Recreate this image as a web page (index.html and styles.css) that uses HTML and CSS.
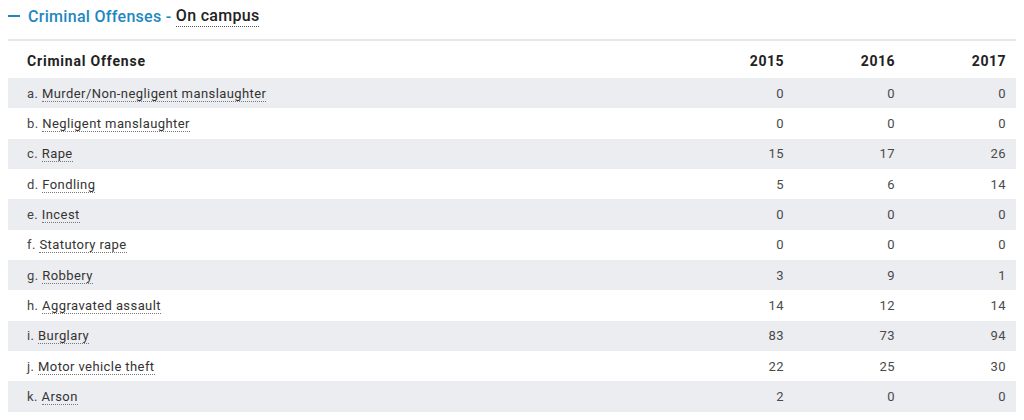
FILE: index.html
```html
<!DOCTYPE html>
<html>
<head>
<meta charset="utf-8">
<link rel="stylesheet" href="styles.css">
</head>
<body>
<div class="section">
  <h2 class="title"><span class="dash"></span><span class="blue">Criminal Offenses - </span><span class="term">On campus</span></h2>
  <table class="data">
    <thead>
      <tr><th class="name">Criminal Offense</th><th>2015</th><th>2016</th><th>2017</th></tr>
    </thead>
    <tbody>
      <tr><td class="name">a. <span class="term">Murder/Non-negligent manslaughter</span></td><td>0</td><td>0</td><td>0</td></tr>
      <tr><td class="name">b. <span class="term">Negligent manslaughter</span></td><td>0</td><td>0</td><td>0</td></tr>
      <tr><td class="name">c. <span class="term">Rape</span></td><td>15</td><td>17</td><td>26</td></tr>
      <tr><td class="name">d. <span class="term">Fondling</span></td><td>5</td><td>6</td><td>14</td></tr>
      <tr><td class="name">e. <span class="term">Incest</span></td><td>0</td><td>0</td><td>0</td></tr>
      <tr><td class="name">f. <span class="term">Statutory rape</span></td><td>0</td><td>0</td><td>0</td></tr>
      <tr><td class="name">g. <span class="term">Robbery</span></td><td>3</td><td>9</td><td>1</td></tr>
      <tr><td class="name">h. <span class="term">Aggravated assault</span></td><td>14</td><td>12</td><td>14</td></tr>
      <tr><td class="name">i. <span class="term">Burglary</span></td><td>83</td><td>73</td><td>94</td></tr>
      <tr><td class="name">j. <span class="term">Motor vehicle theft</span></td><td>22</td><td>25</td><td>30</td></tr>
      <tr><td class="name">k. <span class="term">Arson</span></td><td>2</td><td>0</td><td>0</td></tr>
    </tbody>
  </table>
</div>
</body>
</html>
```
FILE: styles.css
```css
html, body {
  margin: 0;
  padding: 0;
  background: #fff;
}
body {
  font-family: Roboto, "Liberation Sans", sans-serif;
  color: #333;
}
.section {
  padding: 0 8px;
}
.title {
  margin: 0;
  box-sizing: border-box;
  display: flex;
  align-items: center;
  height: 41px;
  padding-bottom: 7px;
  font-size: 16px;
  font-weight: 500;
  letter-spacing: 0.3px;
  border-bottom: 2px solid #e6e7ea;
}
.dash {
  display: inline-block;
  width: 12px;
  height: 2px;
  background: #1e87c0;
  margin-right: 8px;
}
.blue {
  color: #1e87c0;
  white-space: pre;
}
.title .term {
  color: #222;
  padding-bottom: 1px;
}
.term {
  border-bottom: 1px dotted #555;
}
.data {
  width: 100%;
  border-collapse: collapse;
  margin-top: 3px;
  font-size: 13px;
  letter-spacing: 0.42px;
}
.data th {
  font-weight: 700;
  color: #222;
  height: 34px;
  padding: 0 10px;
  text-align: right;
  font-size: 14px;
  letter-spacing: 0.5px;
  width: 91px;
}
.data th.name {
  letter-spacing: 0.8px;
}
.data td {
  height: 30.35px;
  padding: 0 10px;
  text-align: right;
  color: #4a4a4a;
}
.data .name {
  text-align: left;
  padding-left: 19px;
  width: auto;
}
.data td.name {
  color: #444;
}
.data td .term {
  color: #333;
  border-bottom-color: #777;
}
.data tbody tr:nth-child(odd) {
  background: #ecedf1;
}
```
